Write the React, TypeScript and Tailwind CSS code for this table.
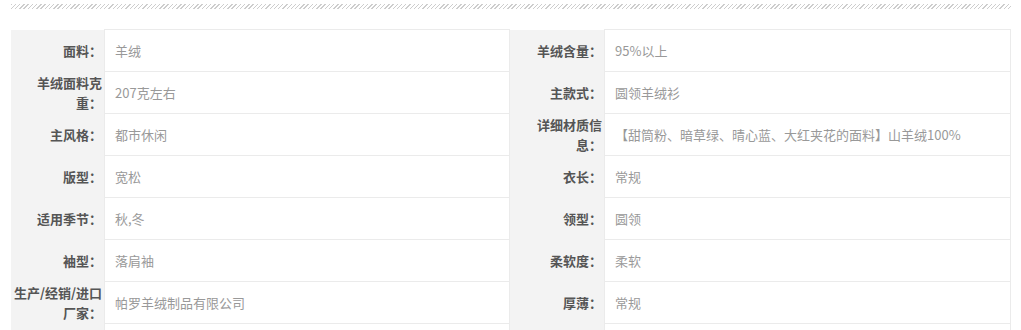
const rows: [string, string, string, string][] = [
  ["面料：", "羊绒", "羊绒含量：", "95%以上"],
  ["羊绒面料克重：", "207克左右", "主款式：", "圆领羊绒衫"],
  ["主风格：", "都市休闲", "详细材质信息：", "【甜筒粉、暗草绿、晴心蓝、大红夹花的面料】山羊绒100%"],
  ["版型：", "宽松", "衣长：", "常规"],
  ["适用季节：", "秋,冬", "领型：", "圆领"],
  ["袖型：", "落肩袖", "柔软度：", "柔软"],
  ["生产/经销/进口厂家：", "帕罗羊绒制品有限公司", "厚薄：", "常规"],
  // last row is cut off by the frame
  ["", "", "", ""],
];

function Label({ text, first, w }: { text: string; first: boolean; w: string }) {
  return (
    <div
      className={`${w} shrink-0 flex items-center justify-end bg-[#f3f3f3] pr-[2px] text-right text-[13px] font-bold leading-[20px] text-[#555] border-b border-[#f3f3f3] ${
        first ? "border-t border-t-white" : ""
      }`}
    >
      <span className="block w-full">{text}</span>
    </div>
  );
}

function Value({ text, first, w }: { text: string; first: boolean; w: string }) {
  return (
    <div
      className={`${w} flex items-center border-x border-b border-[#ebebeb] pl-[10px] text-[13px] leading-[20px] text-[#999] ${
        first ? "border-t" : ""
      }`}
    >
      {text}
    </div>
  );
}

export default function App() {
  return (
    <div className="w-[1021px] h-[330px] overflow-hidden bg-white font-['Noto_Sans_CJK_SC',sans-serif]">
      {/* hatched divider */}
      <div className="ml-[11px] mt-[4px] h-[5px] w-[1000px] bg-[repeating-linear-gradient(135deg,#cdcdcd_0,#cdcdcd_1px,transparent_1px,transparent_3px)]" />

      {/* spec table */}
      <div className="ml-[11px] mt-[20px] w-[1000px]">
        {rows.map((r, i) => (
          <div key={i} className={`flex ${i === 0 ? "h-[43px]" : "h-[42px]"}`}>
            <Label text={r[0]} first={i === 0} w="w-[93px] pl-px" />
            <Value text={r[1]} first={i === 0} w="w-[406px] shrink-0" />
            <Label text={r[2]} first={i === 0} w="w-[94px] pl-[3px]" />
            <Value text={r[3]} first={i === 0} w="flex-1 min-w-0" />
          </div>
        ))}
      </div>
    </div>
  );
}
